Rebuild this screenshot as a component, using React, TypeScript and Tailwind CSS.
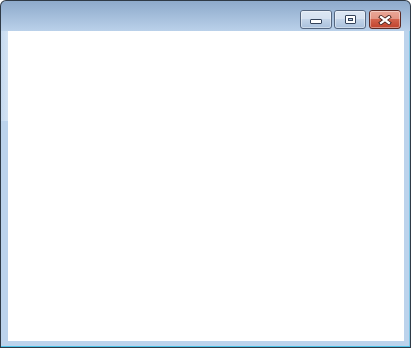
import React from "react";

const CaptionButton = ({
  kind,
}: {
  kind: "min" | "max" | "close";
}) => {
  const isClose = kind === "close";
  return (
    <div
      className={`relative w-[32px] h-[19px] rounded-[3px] border flex items-center justify-center overflow-hidden ${
        isClose
          ? "border-[#5d2a24] bg-gradient-to-b from-[#e8a493] via-[#d2624c] to-[#c0412b]"
          : "border-[#55667f] bg-gradient-to-b from-[#dbe6f2] via-[#c3d4e8] to-[#a9c0dc]"
      }`}
    >
      {/* glass shine on the top half */}
      <div
        className={`absolute inset-x-0 top-0 h-[8px] ${
          isClose ? "bg-[#e9a89a]/70" : "bg-[#dde7f3]/70"
        }`}
      />
      <div className="absolute inset-0 rounded-[2px] border border-white/40" />
      {kind === "min" && (
        <div className="relative mt-[4px] w-[12px] h-[5px] bg-white border border-[#34435a] rounded-[1px]" />
      )}
      {kind === "max" && (
        <div className="relative w-[11px] h-[9px] border border-[#34435a] bg-white rounded-[1px] flex items-center justify-center">
          <div className="w-[5px] h-[3px] border border-[#34435a] bg-[#b8cbe2]" />
        </div>
      )}
      {kind === "close" && (
        <svg width="14" height="10" viewBox="0 0 14 10" className="relative">
          <path
            d="M3 2 L11 8 M11 2 L3 8"
            stroke="#4a241e"
            strokeWidth="4"
            strokeLinecap="square"
          />
          <path
            d="M3 2 L11 8 M11 2 L3 8"
            stroke="#ffffff"
            strokeWidth="2.2"
            strokeLinecap="square"
          />
        </svg>
      )}
    </div>
  );
};

const App = () => {
  return (
    <div className="w-[411px] h-[348px] bg-[#2f3a46] rounded-t-[6px] p-[1px] pb-0 flex flex-col overflow-hidden">
      {/* Title bar */}
      <div className="h-[30px] shrink-0 rounded-t-[5px] bg-gradient-to-b from-[#8eaacb] to-[#bad1ea] flex justify-end items-start pt-[9px] pr-[9px] gap-[2px]">
        <CaptionButton kind="min" />
        <CaptionButton kind="max" />
        <div className="ml-[1px]">
          <CaptionButton kind="close" />
        </div>
      </div>

      {/* Body */}
      <div className="flex-1 flex bg-[#bcd3ec]">
        <div className="w-[7px] flex flex-col">
          <div className="h-[90px] bg-gradient-to-r from-[#c6daf0] to-[#d3e3f4]" />
          <div className="flex-1" />
        </div>
        <div className="flex-1 flex flex-col">
          <div className="flex-1 bg-white" />
          <div className="h-[5px]" />
        </div>
        <div className="w-[6px] border-r border-[#7fc6e4]" />
      </div>
      <div className="h-[1px] bg-[#4cc3e8]" />
      <div className="h-[1px] bg-[#2f3a46]" />
    </div>
  );
};

export default App;
